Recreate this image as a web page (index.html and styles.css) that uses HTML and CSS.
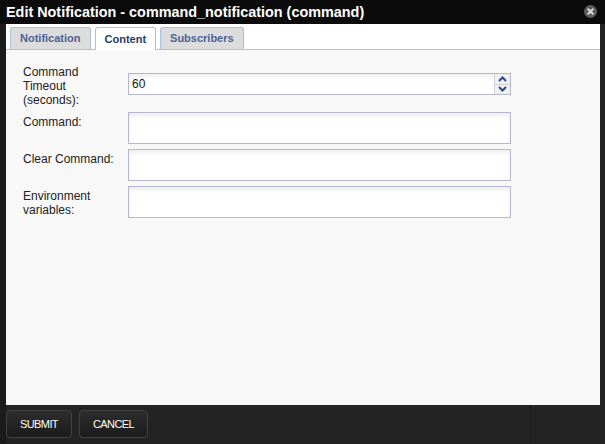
FILE: index.html
```html
<!DOCTYPE html>
<html lang="en">
<head>
<meta charset="utf-8">
<title>Edit Notification</title>
<link rel="stylesheet" href="styles.css">
</head>
<body>
<div class="dialog">
  <div class="titlebar">
    <h1 class="title">Edit Notification - command_notification (command)</h1>
    <span class="close" aria-label="Close">
      <svg width="13" height="13" viewBox="0 0 13 13"><circle cx="6.5" cy="6.5" r="6.5" fill="#5c5c5c"/><path d="M4.2 4.2 L8.8 8.8 M8.8 4.2 L4.2 8.8" stroke="#dcdcdc" stroke-width="2" stroke-linecap="round"/></svg>
    </span>
  </div>
  <div class="frame">
    <div class="panel">
      <div class="tabbar">
        <span class="tab">Notification</span>
        <span class="tab active">Content</span>
        <span class="tab">Subscribers</span>
      </div>
      <div class="content">
        <div class="form">
          <label class="label first">Command Timeout (seconds):</label>
          <div class="field first">
            <input class="input short" type="text" value="60">
            <div class="spinner">
              <span class="spin"><svg width="9" height="6" viewBox="0 0 9 6"><path d="M1 5 L4.5 1.5 L8 5" fill="none" stroke="#2d4a8a" stroke-width="2"/></svg></span>
              <span class="spin"><svg width="9" height="6" viewBox="0 0 9 6"><path d="M1 1 L4.5 4.5 L8 1" fill="none" stroke="#2d4a8a" stroke-width="2"/></svg></span>
            </div>
          </div>
          <label class="label">Command:</label>
          <div class="field"><input class="input tall" type="text"></div>
          <label class="label">Clear Command:</label>
          <div class="field"><input class="input tall" type="text"></div>
          <label class="label">Environment variables:</label>
          <div class="field"><input class="input tall" type="text"></div>
        </div>
      </div>
    </div>
    <div class="footer">
      <div class="actions">
        <button class="btn" type="button">SUBMIT</button>
        <button class="btn" type="button">CANCEL</button>
      </div>
      <div class="footer-end"></div>
    </div>
  </div>
</div>
</body>
</html>
```
FILE: styles.css
```css
* { box-sizing: border-box; }
html, body { margin: 0; padding: 0; }
body {
  background: #1b1b1b;
  font-family: "Liberation Sans", Arial, sans-serif;
  width: 605px;
  height: 444px;
  overflow: hidden;
}
.dialog {
  width: 605px;
  height: 444px;
  display: flex;
  flex-direction: column;
}
.titlebar {
  height: 24px;
  background: #0b0b0b;
  display: flex;
  align-items: center;
  justify-content: space-between;
  padding: 0 8px 0 6px;
}
.title {
  margin: 0;
  color: #fff;
  font-size: 14.4px;
  font-weight: bold;
  line-height: 17px;
}
.close {
  display: flex;
  width: 13px;
  height: 13px;
  margin-top: -2px;
}
.frame {
  flex: 1;
  display: flex;
  flex-direction: column;
  background: #232323;
  border-left: 6px solid #1b1b1b;
}
.panel {
  flex: 1;
  margin-right: 5px;
  display: flex;
  flex-direction: column;
  background: #f8f8f8;
}
.tabbar {
  height: 26px;
  background: #fff;
  border-bottom: 1px solid #a9c0e1;
  display: flex;
  align-items: flex-end;
  gap: 4px;
  padding: 0 0 0 4px;
}
.tab {
  height: 22px;
  padding: 0 9px;
  background: #dcdcdc;
  border: 1px solid #a9c0e1;
  border-bottom: none;
  border-radius: 3px 3px 0 0;
  color: #4c6292;
  font-size: 11px;
  font-weight: bold;
  line-height: 21px;
}
.tab.active {
  background: #fff;
  color: #1f3a6b;
  height: 23px;
  margin-bottom: -1px;
  line-height: 23px;
}
.content {
  flex: 1;
  padding: 15px 0 0 17px;
}
.form {
  display: grid;
  grid-template-columns: 98px 383px;
  column-gap: 7px;
  row-gap: 5px;
}
.label {
  font-size: 12px;
  line-height: 14px;
  color: #222;
  padding-top: 3px;
}
.label.first { padding-top: 0; }
.field {
  position: relative;
  align-self: start;
}
.field.first { margin-top: 8px; }
.input {
  display: block;
  width: 383px;
  margin: 0;
  border: 1px solid #b6b9cd;
  border-radius: 0;
  background: #fff;
  box-shadow: inset 0 3px 4px rgba(0, 0, 0, 0.07);
  font-family: "Liberation Sans", Arial, sans-serif;
  font-size: 12px;
  color: #111;
  padding: 0 3px;
  outline: none;
}
.input.short { height: 22px; }
.input.tall { height: 32px; }
.spinner {
  position: absolute;
  top: 1px;
  right: 1px;
  bottom: 1px;
  width: 16px;
  display: flex;
  flex-direction: column;
  gap: 1px;
  background: #cfd1dc;
  border-left: 1px solid #cfd1dc;
}
.spin {
  flex: 1;
  display: flex;
  align-items: center;
  justify-content: center;
  background: #f0f0f0;
}
.footer {
  height: 39px;
  display: flex;
}
.actions {
  display: flex;
  gap: 7px;
  padding-top: 5px;
}
.btn {
  height: 28px;
  padding: 0 13px;
  border: 1px solid #424242;
  border-radius: 4px;
  background: linear-gradient(#2d2d2d, #1b1b1b);
  color: #fff;
  font-family: "Liberation Sans", Arial, sans-serif;
  font-size: 11px;
  letter-spacing: -0.6px;
}
.footer-end {
  margin-left: auto;
  width: 75px;
  border-left: 1px solid #1a1a1a;
}
```
